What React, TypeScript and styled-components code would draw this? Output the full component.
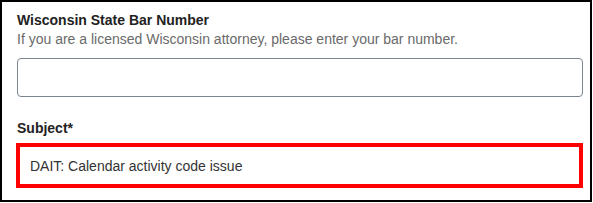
import React from "react";
import styled, { createGlobalStyle } from "styled-components";

const Global = createGlobalStyle`
  html, body { margin: 0; padding: 0; background: #ffffff; }
  body { font-family: "Liberation Sans", Arial, sans-serif; }
`;

const Frame = styled.div`
  box-sizing: border-box;
  width: 592px;
  height: 202px;
  border: 2px solid #000000;
  padding: 8px 7px 0 15px;
  display: flex;
  flex-direction: column;
  background: #ffffff;
`;

const Label = styled.div<{ $top?: number }>`
  font-size: 14px;
  line-height: 20px;
  font-weight: 700;
  color: #222222;
  margin-top: ${(p) => p.$top ?? 0}px;
`;

const Hint = styled.div`
  font-size: 14px;
  line-height: 18px;
  color: #6a6a6a;
`;

const TextInput = styled.input`
  box-sizing: border-box;
  width: 566px;
  height: 39px;
  margin-top: 10px;
  border: 1px solid #7b8691;
  border-radius: 4px;
  background: #ffffff;
  padding: 0 10px;
  font-family: "Liberation Sans", Arial, sans-serif;
  font-size: 14px;
  color: #333333;
  outline: none;
`;

const HighlightInput = styled.input`
  box-sizing: border-box;
  width: 567px;
  height: 45px;
  margin: 5px 0 0 -1px;
  border: 4px solid #ff0000;
  border-radius: 0;
  background: #ffffff;
  padding: 0 9px 0 10px;
  font-family: "Liberation Sans", Arial, sans-serif;
  font-size: 14px;
  color: #333333;
  outline: none;
`;

export default function App() {
  return (
    <>
      <Global />
      <Frame>
        <Label>Wisconsin State Bar Number</Label>
        <Hint>If you are a licensed Wisconsin attorney, please enter your bar number.</Hint>
        <TextInput type="text" />
        <Label $top={21}>Subject*</Label>
        <HighlightInput type="text" defaultValue="DAIT: Calendar activity code issue" readOnly />
      </Frame>
    </>
  );
}
